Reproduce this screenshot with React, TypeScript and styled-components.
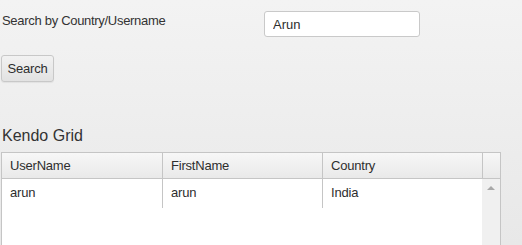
import styled, { createGlobalStyle } from "styled-components";

const GlobalStyle = createGlobalStyle`
  html, body {
    margin: 0;
    padding: 0;
    overflow: hidden;
  }
  body {
    height: 245px;
    background: linear-gradient(#f3f3f3, #e8e8e8);
    font-family: "Liberation Sans", Arial, sans-serif;
    color: #2e2e2e;
  }
`;

interface User {
  userName: string;
  firstName: string;
  country: string;
}

const users: User[] = [{ userName: "arun", firstName: "arun", country: "India" }];

const Page = styled.div`
  display: flex;
  flex-direction: column;
  align-items: flex-start;
  padding: 11px 0 0 1px;
`;

const SearchRow = styled.div`
  display: flex;
  align-items: flex-start;
`;

const Label = styled.label`
  width: 262px;
  margin: 2px 0 0 1px;
  font-size: 13px;
  line-height: 16px;
  letter-spacing: -0.3px;
  color: #333;
`;

const SearchInput = styled.input`
  box-sizing: border-box;
  width: 156px;
  height: 26px;
  padding: 0 8px;
  border: 1px solid #c9c9c9;
  border-radius: 3px;
  background: #fff;
  font-family: inherit;
  font-size: 13px;
  color: #2e2e2e;
  outline: none;
`;

const Button = styled.button`
  box-sizing: border-box;
  margin-top: 18px;
  width: 53px;
  height: 27px;
  padding: 0 0 1px;
  border: 1px solid #c8c8c8;
  border-radius: 3px;
  background: linear-gradient(#f2f2f2, #e2e2e2);
  box-shadow: 0 1px 1px rgba(0, 0, 0, 0.06);
  font-family: inherit;
  font-size: 13px;
  letter-spacing: -0.2px;
  color: #2e2e2e;
`;

const Title = styled.h3`
  margin: 44px 0 0 1px;
  font-size: 16px;
  font-weight: normal;
  line-height: 20px;
  color: #333;
`;

const Grid = styled.div`
  box-sizing: border-box;
  width: 500px;
  margin-top: 6px;
  border: 1px solid #c5c5c5;
  border-bottom: 0;
`;

const Columns = styled.div`
  display: grid;
  grid-template-columns: 160px 160px 160px 18px;
`;

const HeaderRow = styled(Columns)`
  background: linear-gradient(#f7f7f7, #e9e9e9);
  border-bottom: 1px solid #c5c5c5;
`;

const HeaderCell = styled.div<{ $first?: boolean }>`
  box-sizing: border-box;
  height: 25px;
  padding: 5px 8px 4px;
  border-left: ${(p) => (p.$first ? "none" : "1px solid #c5c5c5")};
  font-size: 13px;
  line-height: 16px;
  letter-spacing: -0.2px;
  color: #2e2e2e;
`;

const Body = styled(Columns)`
  height: 66px;
  background: #fff;
`;

const Rows = styled.div`
  grid-column: 1 / 4;
  display: flex;
  flex-direction: column;
`;

const DataRow = styled(Columns)`
  grid-template-columns: 160px 160px 160px;
`;

const DataCell = styled.div<{ $first?: boolean }>`
  box-sizing: border-box;
  height: 29px;
  padding: 6px 8px 7px;
  border-left: ${(p) => (p.$first ? "none" : "1px solid #c5c5c5")};
  font-size: 13px;
  line-height: 16px;
  letter-spacing: -0.2px;
  color: #2e2e2e;
`;

const ScrollTrack = styled.div`
  display: flex;
  justify-content: center;
  padding-top: 7px;
  background: #f0f0f0;
`;

const Arrow = styled.div`
  width: 0;
  height: 0;
  border-left: 4px solid transparent;
  border-right: 4px solid transparent;
  border-bottom: 4px solid #a8a8a8;
`;

export default function App() {
  return (
    <>
      <GlobalStyle />
      <Page>
        <SearchRow>
          <Label>Search by Country/Username</Label>
          <SearchInput defaultValue="Arun" />
        </SearchRow>
        <Button>Search</Button>
        <Title>Kendo Grid</Title>
        <Grid>
          <HeaderRow>
            <HeaderCell $first>UserName</HeaderCell>
            <HeaderCell>FirstName</HeaderCell>
            <HeaderCell>Country</HeaderCell>
            <HeaderCell />
          </HeaderRow>
          <Body>
            <Rows>
              {users.map((u) => (
                <DataRow key={u.userName}>
                  <DataCell $first>{u.userName}</DataCell>
                  <DataCell>{u.firstName}</DataCell>
                  <DataCell>{u.country}</DataCell>
                </DataRow>
              ))}
            </Rows>
            <ScrollTrack>
              <Arrow />
            </ScrollTrack>
          </Body>
        </Grid>
      </Page>
    </>
  );
}
